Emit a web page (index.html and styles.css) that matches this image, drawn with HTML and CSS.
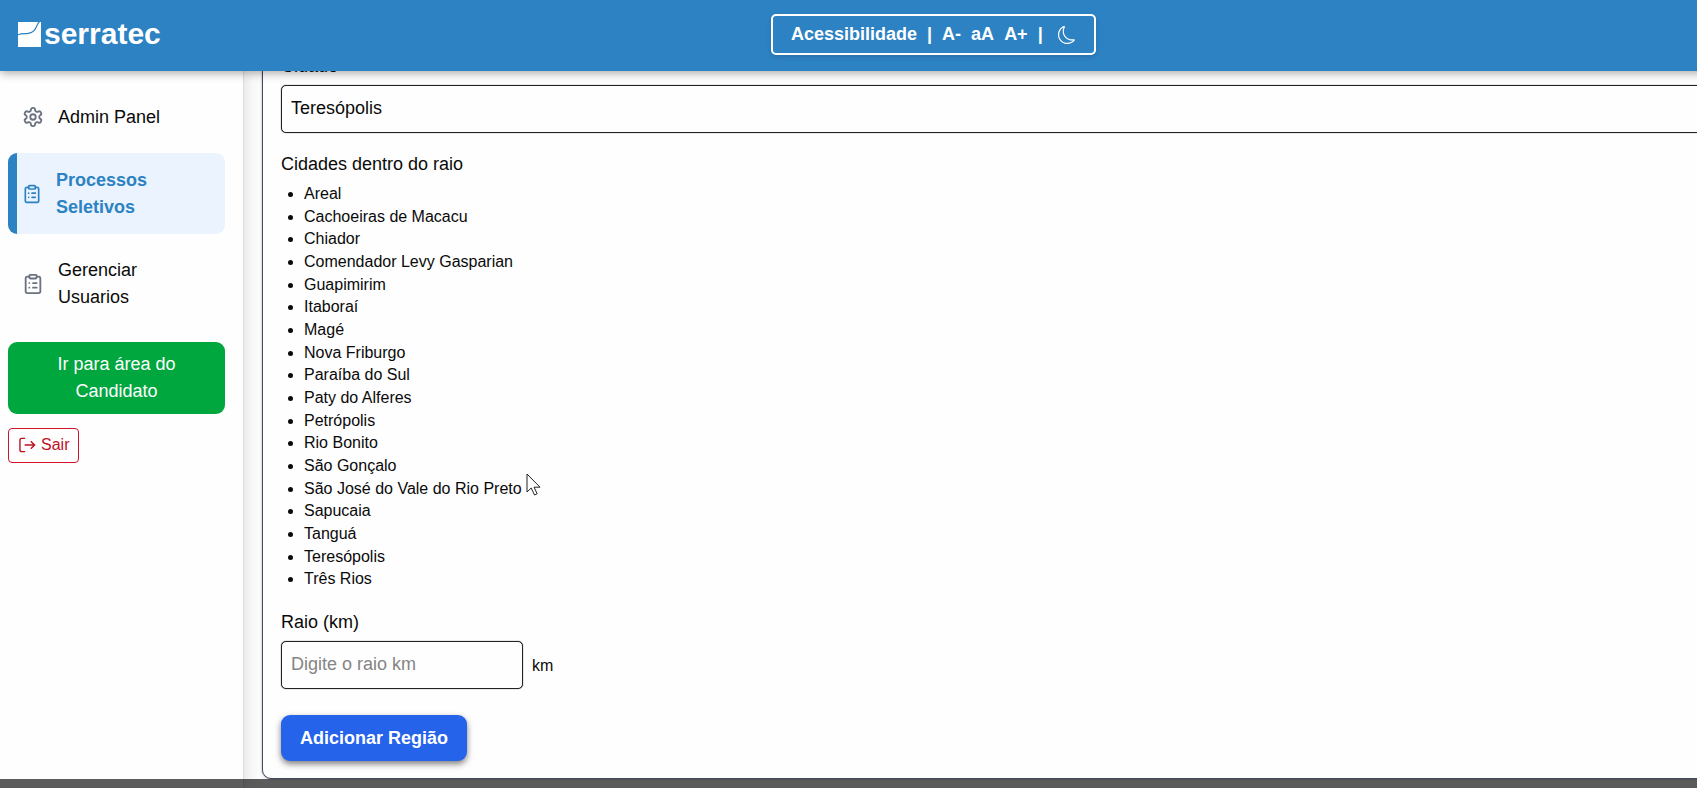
FILE: index.html
```html
<!DOCTYPE html>
<html lang="pt-BR">
<head>
<meta charset="utf-8">
<title>Serratec - Processos Seletivos</title>
<meta name="viewport" content="width=device-width, initial-scale=1">
<link rel="stylesheet" href="styles.css">
</head>
<body>
<svg class="sprite" aria-hidden="true">
  <symbol id="clipboard" viewBox="0 0 24 24">
    <rect x="8" y="2" width="8" height="4" rx="1"/>
    <path d="M16 4h2a2 2 0 0 1 2 2v14a2 2 0 0 1-2 2H6a2 2 0 0 1-2-2V6a2 2 0 0 1 2-2h2M12 11h4M12 16h4M8 11h.01M8 16h.01"/>
  </symbol>
</svg>
<div class="page">
  <header class="topbar">
    <a class="brand" href="#">
      <svg class="brand-mark" viewBox="0 0 23 25" aria-hidden="true">
        <path fill="#fff" d="M0 0h23v25H0z"/>
        <path fill="none" stroke="#2d82c3" stroke-width="1.2" d="M0 12.800C4 11 7 12 10.500 11.400 16 10.500 17.500 7 19 3.500 19.700 1.800 20.500.6 21.500-.5"/>
      </svg>
      <span>serratec</span>
    </a>
    <div class="access">
      <span>Acessibilidade</span>
      <span>|</span>
      <button type="button">A-</button>
      <button type="button">aA</button>
      <button type="button">A+</button>
      <span>|</span>
      <button type="button" class="moon" aria-label="Modo escuro">
        <svg viewBox="0 0 16 16" aria-hidden="true"><path fill="currentColor" d="M6 .278a.77.77 0 0 1 .08.858 7.200 7.200 0 0 0-.878 3.460c0 4.021 3.278 7.277 7.318 7.277q.792-.001 1.533-.16a.79.79 0 0 1 .810.316.73.73 0 0 1-.031.893A8.350 8.350 0 0 1 8.344 16C3.734 16 0 12.286 0 7.710 0 4.266 2.114 1.312 5.124.060A.75.75 0 0 1 6 .278M4.858 1.311A7.270 7.270 0 0 0 1.025 7.710c0 4.020 3.279 7.276 7.319 7.276a7.320 7.320 0 0 0 5.205-2.162q-.506.063-1.029.063c-4.610 0-8.343-3.714-8.343-8.290 0-1.167.242-2.278.681-3.286"/></svg>
      </button>
    </div>
  </header>

  <div class="body">
    <nav class="sidebar">
      <a class="item" href="#">
        <svg class="icon gear" viewBox="0 0 24 24" aria-hidden="true"><path d="M12.220 2h-.44a2 2 0 0 0-2 2v.18a2 2 0 0 1-1 1.730l-.43.25a2 2 0 0 1-2 0l-.15-.08a2 2 0 0 0-2.730.73l-.22.38a2 2 0 0 0 .73 2.730l.15.1a2 2 0 0 1 1 1.720v.51a2 2 0 0 1-1 1.740l-.15.09a2 2 0 0 0-.73 2.730l.22.38a2 2 0 0 0 2.730.73l.15-.08a2 2 0 0 1 2 0l.43.25a2 2 0 0 1 1 1.730V20a2 2 0 0 0 2 2h.44a2 2 0 0 0 2-2v-.18a2 2 0 0 1 1-1.730l.43-.25a2 2 0 0 1 2 0l.15.08a2 2 0 0 0 2.730-.73l.22-.39a2 2 0 0 0-.73-2.730l-.15-.08a2 2 0 0 1-1-1.740v-.5a2 2 0 0 1 1-1.740l.15-.09a2 2 0 0 0 .73-2.730l-.22-.38a2 2 0 0 0-2.730-.73l-.15.08a2 2 0 0 1-2 0l-.43-.25a2 2 0 0 1-1-1.730V4a2 2 0 0 0-2-2z"/><circle cx="12" cy="12" r="3"/></svg>
        <span>Admin Panel</span>
      </a>
      <a class="item active" href="#" aria-current="page">
        <svg class="icon" aria-hidden="true"><use href="#clipboard"/></svg>
        <span>Processos Seletivos</span>
      </a>
      <a class="item" href="#">
        <svg class="icon" aria-hidden="true"><use href="#clipboard"/></svg>
        <span>Gerenciar Usuarios</span>
      </a>
      <button type="button" class="candidate">Ir para área do Candidato</button>
      <button type="button" class="logout">
        <svg viewBox="0 0 18 16" aria-hidden="true"><path d="M6.500 1H3a2 2 0 0 0-2 2v10a2 2 0 0 0 2 2h3.500M6 8h10.500M12.500 4l4 4-4 4"/></svg>
        Sair
      </button>
    </nav>

    <main class="content">
      <form class="card">
        <label for="cidade">Cidade</label>
        <input class="field" id="cidade" type="text" value="Teresópolis">

        <h2 id="cidades">Cidades dentro do raio</h2>
        <ul class="cities" aria-labelledby="cidades">
          <li>Areal</li>
          <li>Cachoeiras de Macacu</li>
          <li>Chiador</li>
          <li>Comendador Levy Gasparian</li>
          <li>Guapimirim</li>
          <li>Itaboraí</li>
          <li>Magé</li>
          <li>Nova Friburgo</li>
          <li>Paraíba do Sul</li>
          <li>Paty do Alferes</li>
          <li>Petrópolis</li>
          <li>Rio Bonito</li>
          <li>São Gonçalo</li>
          <li>São José do Vale do Rio Preto</li>
          <li>Sapucaia</li>
          <li>Tanguá</li>
          <li>Teresópolis</li>
          <li>Três Rios</li>
        </ul>

        <label for="raio">Raio (km)</label>
        <div class="radius">
          <input class="field" id="raio" type="text" placeholder="Digite o raio km">
          <span>km</span>
        </div>
        <button type="button" class="add">Adicionar Região</button>
      </form>
    </main>
  </div>
</div>
<svg class="pointer" viewBox="0 0 15 23" aria-hidden="true"><path fill="#fff" stroke="#222" d="M1 1v18l4.200-4 3.300 7 2.700-1.200L8 14.200h6z"/></svg>
<div class="bottom-shade"></div>
</body>
</html>
```
FILE: styles.css
```css
*, *::before, *::after {
  box-sizing: border-box;
}

html {
  overflow: hidden;
}

body {
  margin: 0;
  overflow: hidden;
  background: #fbfbfb;
  color: #0a0a0a;
  font: 18px/27px "Liberation Sans", Arial, sans-serif;
}

button, input {
  font: inherit;
  color: inherit;
}

button {
  border: 0;
  padding: 0;
  background: none;
  cursor: pointer;
}

a {
  color: inherit;
  text-decoration: none;
}

.sprite {
  position: absolute;
  width: 0;
  height: 0;
}

/* The page is a little wider than the window. */
.page {
  display: flex;
  flex-direction: column;
  width: 110vw;
  min-height: 100vh;
}

.topbar {
  position: relative;
  z-index: 2;
  display: grid;
  grid-template-columns: 1fr auto 1fr;
  align-items: center;
  padding: 14px 18px 16px;
  background: #2d82c3;
  color: #fff;
  box-shadow: 0 2px 9px rgba(0, 0, 0, 0.35);
}

.brand {
  display: flex;
  align-items: center;
  gap: 3px;
  font-size: 30px;
  font-weight: 700;
}

.brand-mark {
  width: 23px;
  height: 25px;
}

.brand span {
  padding-bottom: 2px;
}

.access {
  display: flex;
  align-items: center;
  gap: 10px;
  padding: 5px 18px;
  border: 2px solid #fff;
  border-radius: 5px;
  font-weight: 700;
  box-shadow: 0 2px 4px rgba(0, 0, 0, 0.15);
}

.moon {
  display: flex;
  margin-left: 5px;
}

.moon svg {
  width: 18px;
  height: 18px;
}

.body {
  display: flex;
  flex: 1;
}

.sidebar {
  position: relative;
  display: flex;
  flex: none;
  flex-direction: column;
  gap: 9px;
  width: 244px;
  padding: 18px 18px 18px 8px;
  border-right: 1px solid #dcdcdc;
  background: #fefefe;
  box-shadow: 2px 0 12px rgba(0, 0, 0, 0.1);
}

.item {
  display: flex;
  align-items: center;
  gap: 14px;
  min-height: 54px;
  padding: 14px 48px 13px 14px;
  border-radius: 9px;
}

.item:first-child {
  min-height: 55px;
  padding-right: 14px;
}

.active {
  padding-left: 5px;
  border-left: 9px solid #2d82c3;
  background: #eaf3fe;
  color: #2d82c3;
  font-weight: 700;
}

.icon {
  flex: none;
  width: 22px;
  height: 22px;
  fill: none;
  stroke: #6b7280;
  stroke-width: 2;
  stroke-linecap: round;
  stroke-linejoin: round;
}

.active .icon {
  width: 20px;
  height: 20px;
  stroke: #2d82c3;
}

.candidate {
  margin-top: 9px;
  padding: 9px 36px;
  border-radius: 9px;
  background: #00a63e;
  color: #fff;
}

.logout {
  display: flex;
  align-items: center;
  align-self: flex-start;
  gap: 5px;
  margin-top: 5px;
  padding: 4px 9px 5px 10px;
  border: 1px solid #d0142c;
  border-radius: 4px;
  color: #c10f1f;
  font-size: 16px;
  line-height: 24px;
}

.logout svg {
  width: 17px;
  height: 16px;
  fill: none;
  stroke: currentColor;
  stroke-width: 1.5;
}

.content {
  flex: 1;
  padding: 0 18px 8px;
}

.card {
  display: flex;
  flex-direction: column;
  align-items: flex-start;
  margin-top: -28px;
  padding: 9px 18px 17px;
  border: 1px solid #414b5a;
  border-radius: 9px;
  background: #fefefe;
  box-shadow: 0 0 2px rgba(40, 50, 90, 0.5);
}

.field {
  width: 100%;
  margin-top: 5px;
  padding: 9px 9px 10px;
  border: 1px solid #222;
  border-radius: 5px;
  background: #fefefe;
  line-height: 27px;
  box-shadow: 0 0 1px #222;
}

.field::placeholder {
  color: #858585;
  opacity: 1;
}

h2 {
  margin: 18px 0 5px;
  font: inherit;
}

.cities {
  margin: 0 0 18px;
  padding-left: 23px;
  font-size: 16px;
  line-height: 1.417;
}

.radius {
  display: flex;
  align-items: center;
  gap: 9px;
  font-size: 16px;
}

.radius .field {
  width: 242px;
  font-size: 18px;
}

.radius span {
  padding-top: 5px;
}

.add {
  margin-top: 26px;
  padding: 9px 19px;
  border-radius: 9px;
  background: #2563eb;
  color: #fff;
  font-weight: 700;
  line-height: 28px;
  box-shadow: 0 3px 6px rgba(0, 0, 0, 0.5);
}

.pointer {
  position: absolute;
  left: 526px;
  top: 473px;
  z-index: 3;
  width: 15px;
  height: 23px;
}

.bottom-shade {
  position: fixed;
  right: 0;
  bottom: 0;
  left: 0;
  z-index: 4;
  height: 9px;
  background: rgba(0, 0, 0, 0.64);
}
```
